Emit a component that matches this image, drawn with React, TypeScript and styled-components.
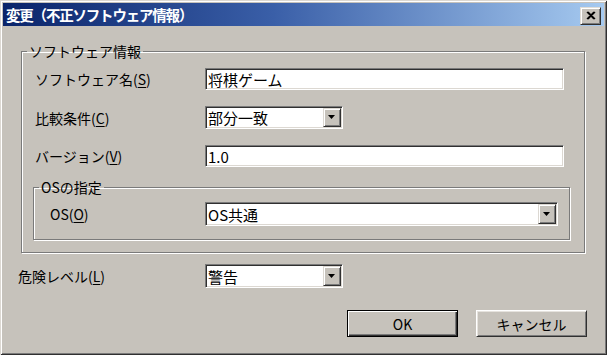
import React from 'react'
import styled, { createGlobalStyle } from 'styled-components'

const FACE = '#c6c2bb'

const GlobalStyle = createGlobalStyle`
  html, body {
    margin: 0;
    padding: 0;
    background: ${FACE};
  }
  body {
    font-family: "Noto Sans CJK JP", "Noto Sans", sans-serif;
    color: #000;
  }
`

const Window = styled.div`
  width: 607px;
  height: 355px;
  box-sizing: border-box;
  padding: 3px;
  background: ${FACE};
  box-shadow: inset 1px 1px 0 #dcd8d2, inset -1px -1px 0 #303030,
    inset 2px 2px 0 #fff, inset -2px -2px 0 #7a7a7a;
  display: flex;
  flex-direction: column;
`

const TitleBar = styled.div`
  height: 23px;
  flex: none;
  display: flex;
  align-items: center;
  justify-content: space-between;
  padding: 0 3px 0 3px;
  background: linear-gradient(to right, #0a246a 0%, #3a5fa8 45%, #a6caf0 100%);
  color: #fff;
  font-weight: bold;
  font-size: 14.5px;
  line-height: 23px;
  letter-spacing: -1.2px;
`

const CloseButton = styled.div`
  width: 21px;
  height: 18px;
  box-sizing: border-box;
  margin-top: 2px;
  background: ${FACE};
  border: 1px solid;
  border-color: #e0ddd7 #303030 #303030 #e0ddd7;
  box-shadow: inset 1px 1px 0 #fff, inset -1px -1px 0 #7a7a7a;
  display: flex;
  align-items: center;
  justify-content: center;
`

const Body = styled.div`
  flex: 1;
  display: flex;
  flex-direction: column;
  padding: 0 15px 0 15px;
`

const Group = styled.fieldset<{ $mt: number; $ml: number; $mr: number; $pb: number }>`
  margin: ${p => p.$mt}px ${p => p.$mr}px 0 ${p => p.$ml}px;
  padding: 0 0 ${p => p.$pb}px 0;
  min-width: 0;
  border: 1px solid #7a7a7a;
  box-shadow: 1px 1px 0 #fff, inset 1px 1px 0 #fff;
`

const Legend = styled.legend`
  margin-left: 5px;
  padding: 0 2px;
  font-size: 14px;
  line-height: 16px;
  height: 16px;
`

const Row = styled.div<{ $mt: number; $pl: number; $label: number }>`
  margin-top: ${p => p.$mt}px;
  padding-left: ${p => p.$pl}px;
  display: grid;
  grid-template-columns: ${p => p.$label}px auto;
  align-items: center;
`

const Label = styled.div`
  font-size: 14px;
  line-height: 18px;
  white-space: nowrap;
`

const Key = styled.span`
  text-decoration: underline;
  text-underline-offset: 2px;
`

const Sunken = styled.div<{ $w: number; $h: number }>`
  width: ${p => p.$w}px;
  height: ${p => p.$h}px;
  box-sizing: border-box;
  background: #fff;
  border: 1px solid;
  border-color: #7a7a7a #fff #fff #7a7a7a;
  box-shadow: inset 1px 1px 0 #303030, inset -1px -1px 0 #dcd8d2;
  padding: 1px 1px 1px 2px;
  display: flex;
  align-items: stretch;
`

const FieldText = styled.div`
  flex: 1;
  font-size: 15px;
  line-height: 19px;
  display: flex;
  align-items: center;
  white-space: nowrap;
  overflow: hidden;
`

const DropButton = styled.div`
  width: 18px;
  flex: none;
  box-sizing: border-box;
  background: ${FACE};
  border: 1px solid;
  border-color: #dcd8d2 #303030 #303030 #dcd8d2;
  box-shadow: inset 1px 1px 0 #fff, inset -1px -1px 0 #7a7a7a;
  display: flex;
  align-items: center;
  justify-content: center;
`

const ButtonRow = styled.div`
  margin-top: 22px;
  padding-right: 2px;
  display: flex;
  justify-content: flex-end;
  gap: 18px;
`

const Button = styled.div<{ $default?: boolean }>`
  width: 111px;
  height: 27px;
  box-sizing: border-box;
  background: ${FACE};
  font-size: 14px;
  display: flex;
  align-items: center;
  justify-content: center;
  border: 1px solid;
  border-color: ${p => (p.$default ? '#000' : '#fff #303030 #303030 #fff')};
  box-shadow: ${p =>
    p.$default
      ? 'inset 1px 1px 0 #fff, inset -1px -1px 0 #303030, inset -2px -2px 0 #7a7a7a'
      : 'inset 1px 1px 0 #e6e3de, inset -1px -1px 0 #7a7a7a'};
`

function Arrow() {
  return (
    <svg width="8" height="5" viewBox="0 0 8 5">
      <polygon points="0,0 7,0 3.5,4" fill="#000" />
    </svg>
  )
}

function Combo({ w, h, value }: { w: number; h: number; value: string }) {
  return (
    <Sunken $w={w} $h={h}>
      <FieldText>{value}</FieldText>
      <DropButton>
        <Arrow />
      </DropButton>
    </Sunken>
  )
}

function TextBox({ w, h, value }: { w: number; h: number; value: string }) {
  return (
    <Sunken $w={w} $h={h}>
      <FieldText>{value}</FieldText>
    </Sunken>
  )
}

export default function App() {
  return (
    <>
      <GlobalStyle />
      <Window>
        <TitleBar>
          <span>変更（不正ソフトウェア情報）</span>
          <CloseButton>
            <svg width="10" height="9" viewBox="0 0 10 9">
              <path d="M1 1 L8 8 M2 1 L9 8 M8 1 L1 8 M9 1 L2 8" stroke="#000" strokeWidth="1.4" />
            </svg>
          </CloseButton>
        </TitleBar>
        <Body>
          <Group $mt={17} $ml={3} $mr={4} $pb={12}>
            <Legend>ソフトウェア情報</Legend>
            <Row $mt={9} $pl={13} $label={170}>
              <Label>ソフトウェア名(<Key>S</Key>)</Label>
              <TextBox w={359} h={22} value="将棋ゲーム" />
            </Row>
            <Row $mt={16} $pl={13} $label={170}>
              <Label>比較条件(<Key>C</Key>)</Label>
              <Combo w={138} h={23} value="部分一致" />
            </Row>
            <Row $mt={16} $pl={13} $label={170}>
              <Label>バージョン(<Key>V</Key>)</Label>
              <TextBox w={359} h={22} value="1.0" />
            </Row>
            <Group $mt={12} $ml={11} $mr={14} $pb={13}>
              <Legend>OSの指定</Legend>
              <Row $mt={7} $pl={16} $label={155}>
                <Label>OS(<Key>O</Key>)</Label>
                <Combo w={353} h={24} value="OS共通" />
              </Row>
            </Group>
          </Group>
          <Row $mt={11} $pl={0} $label={187}>
            <Label>危険レベル(<Key>L</Key>)</Label>
            <Combo w={138} h={24} value="警告" />
          </Row>
          <ButtonRow>
            <Button $default>OK</Button>
            <Button>キャンセル</Button>
          </ButtonRow>
        </Body>
      </Window>
    </>
  )
}
